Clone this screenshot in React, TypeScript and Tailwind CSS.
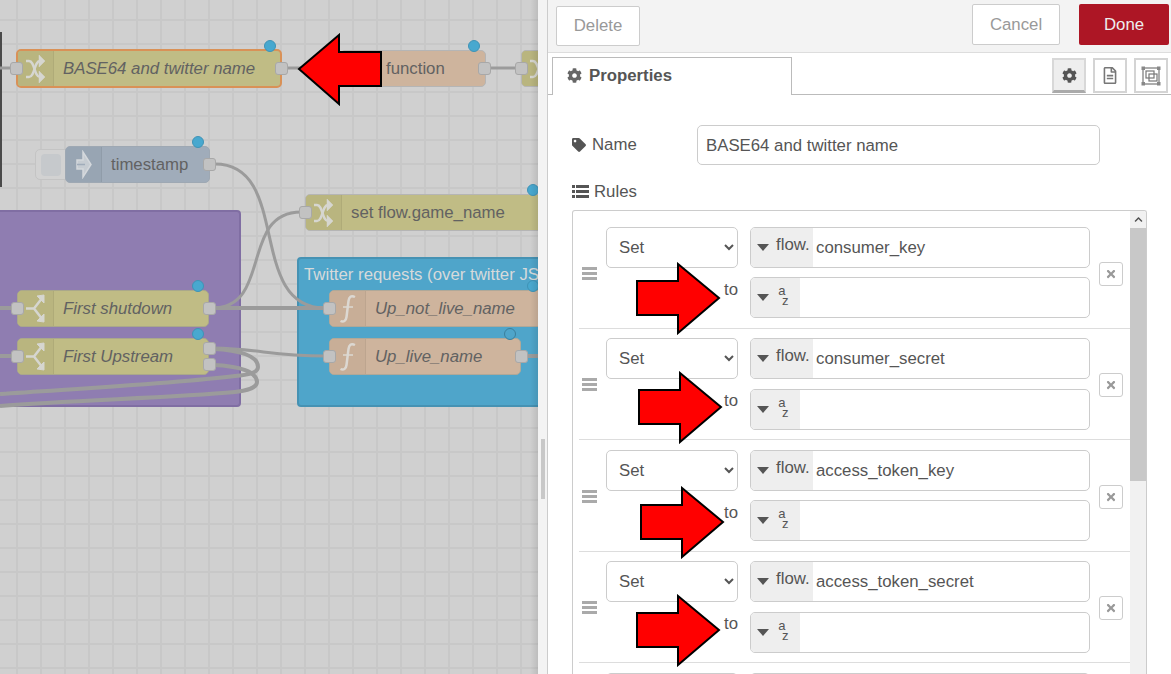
import React from "react";
import { FaChevronUp, FaCog, FaRegFileAlt, FaTag, FaTimes } from "react-icons/fa";

const font = "font-['Liberation_Sans',Arial,sans-serif]";

const ShuffleIcon = () => (
  <svg width="20" height="30" viewBox="0 0 20 30" fill="none" stroke="#d6d6d0" strokeWidth="2.500">
    <path d="M0 7h3C9 7 8 23 14 23h1" />
    <path d="M0 23h3C9 23 8 7 14 7h1" />
    <path d="M13 1l6 6-6 6zM13 17l6 6-6 6z" fill="#d6d6d0" strokeWidth="0.500" />
  </svg>
);

const SwitchIcon = () => (
  <svg width="19" height="29" viewBox="0 0 19 29" fill="none" stroke="#d6d6d0" strokeWidth="2.500">
    <path d="M0 14.500h8l7-9M8 14.500l7 9" />
    <path d="M11 2l7-1v8zM11 27l7 1v-8z" fill="#d6d6d0" strokeWidth="1" />
  </svg>
);

const FunctionIcon = () => (
  <svg width="18" height="30" viewBox="0 0 18 30" fill="none" stroke="#dcd8d2" strokeWidth="2.500">
    <path d="M16 3c-4-2-6 0-6.500 4l-2 16c-.5 4-3 5.500-6 4" />
    <path d="M4 13h10" strokeWidth="1.500" />
  </svg>
);

const InjectIcon = () => (
  <svg width="16" height="29" viewBox="0 0 16 29" fill="#c6ccd2" stroke="#d4d8dc" strokeWidth="1.500">
    <path d="M1 10h6V2l8 12.500L7 27v-8H1z" />
    <path d="M1 14.500h8" stroke="#a0acba" />
  </svg>
);

const Caret = () => (
  <svg width="12" height="7" viewBox="0 0 12 7" className="shrink-0" fill="#555">
    <polygon points="0,0 12,0 6,7" />
  </svg>
);

const Port = ({ className }: { className: string }) => (
  <div className={`absolute w-[13px] h-[13px] rounded-[3px] bg-[#c2c2c2] border border-[#a8a8a8] ${className}`} />
);

const Dot = ({ className }: { className: string }) => (
  <div className={`absolute w-[12px] h-[12px] rounded-full bg-[#48a8cf] border border-[#3f93b6] ${className}`} />
);

type NodeProps = {
  box: string;
  icon: React.ReactNode;
  label: string;
  textClass?: string;
  bg: string;
  iconBg: string;
};

const FlowNode = ({ box, icon, label, textClass = "", bg, iconBg }: NodeProps) => (
  <div className={`absolute h-[37px] rounded-[5px] border flex items-center overflow-hidden ${bg} ${box}`}>
    <div className={`w-[36px] h-full shrink-0 flex items-center justify-center border-r border-[#0000000d] ${iconBg}`}>{icon}</div>
    <span className={`ml-[9px] text-[16.800px] whitespace-nowrap text-[#626262] ${textClass}`}>{label}</span>
  </div>
);

const Wires = () => (
  <svg className="absolute inset-0 w-[538px] h-[674px]" fill="none" stroke="#9b9b9b" strokeWidth="3">
    <path d="M0 68h12M285 68h20M490 68h28" />
    <path d="M215 164C292 164 246 308 325 308" />
    <path d="M213 308C272 308 240 212 301 212" />
    <path d="M213 308H325" strokeWidth="4" />
    <path d="M213 348C262 349 270 356 325 356" />
    <path d="M213 349C240 350 258 356 258 367C258 373 248 375 235 376C170 384 70 389 0 394" strokeWidth="4" />
    <path d="M213 365C240 366 257 372 257 382C257 388 245 391 235 392C170 398 70 400 0 406" strokeWidth="4" />
    <path d="M0 308h12M0 356h12M525 356h13" strokeWidth="4" />
  </svg>
);

const Canvas = () => (
  <div className="relative w-[538px] h-full shrink-0 overflow-hidden bg-[#d0d0d0] bg-[linear-gradient(#c8c8c8_2px,transparent_2px),linear-gradient(90deg,#c8c8c8_2px,transparent_2px)] bg-[size:24px_24px] bg-[position:16px_19px] text-[#626262]">
    {/* Groups */}
    <div className="absolute left-0 top-[32px] w-[2px] h-[155px] bg-[#4a4a4a]" />
    <div className="absolute left-[-10px] top-[210px] w-[251px] h-[197px] rounded-[4px] bg-[#8f7db1] border-2 border-[#806ea3]" />
    <div className="absolute left-[297px] top-[257px] w-[260px] h-[150px] rounded-[4px] bg-[#4fa5ca] border-2 border-[#4692b3] overflow-hidden">
      <span className="absolute left-[5px] top-[3px] text-[16.800px] whitespace-nowrap text-[#d6dadb]">Twitter requests (over twitter JS</span>
    </div>

    <Wires />

    {/* Nodes */}
    <FlowNode box="left-[16px] top-[49px] w-[266px] h-[39px] border-2 border-[#d99157]" bg="bg-[#c0bc85]" iconBg="bg-[#b9b57f]" icon={<ShuffleIcon />} label="BASE64 and twitter name" textClass="italic" />
    <Port className="left-[10px] top-[62px]" />
    <Port className="left-[275px] top-[62px]" />
    <Dot className="left-[264px] top-[40px]" />

    <FlowNode box="left-[340px] top-[50px] w-[146px] border-[#b5b5b5]" bg="bg-[#ceb49d]" iconBg="bg-[#ceb49d]" icon={null} label="function" />
    <Port className="left-[478px] top-[62px]" />
    <Dot className="left-[468px] top-[40px]" />
    <FlowNode box="left-[521px] top-[50px] w-[60px] border-[#b5b5b5]" bg="bg-[#c0bc85]" iconBg="bg-[#b9b57f]" icon={<ShuffleIcon />} label="" />
    <Port className="left-[515px] top-[62px]" />

    <div className="absolute left-[35px] top-[149px] w-[35px] h-[31px] rounded-[5px] border border-[#c4c4c4] bg-[#d2d2d2] flex items-center pl-[5px]">
      <div className="w-[20px] h-[22px] rounded-[4px] bg-[#c6c9cc]" />
    </div>
    <FlowNode box="left-[65px] top-[146px] w-[145px] border-[#9ea8b3]" bg="bg-[#a0acba]" iconBg="bg-[#98a5b3]" icon={<InjectIcon />} label="timestamp" />
    <Port className="left-[203px] top-[158px]" />
    <Dot className="left-[192px] top-[136px]" />

    <FlowNode box="left-[305px] top-[194px] w-[300px] border-[#b5b5b5]" bg="bg-[#c0bc85]" iconBg="bg-[#b9b57f]" icon={<ShuffleIcon />} label="set flow.game_name" />
    <Port className="left-[299px] top-[206px]" />
    <Dot className="left-[527px] top-[184px]" />

    <FlowNode box="left-[17px] top-[290px] w-[192px] border-[#aaa88a]" bg="bg-[#c0bc85]" iconBg="bg-[#b9b57f]" icon={<SwitchIcon />} label="First shutdown" textClass="italic" />
    <Port className="left-[11px] top-[302px]" />
    <Port className="left-[203px] top-[302px]" />
    <Dot className="left-[192px] top-[280px]" />

    <FlowNode box="left-[17px] top-[338px] w-[192px] border-[#aaa88a]" bg="bg-[#c0bc85]" iconBg="bg-[#b9b57f]" icon={<SwitchIcon />} label="First Upstream" textClass="italic" />
    <Port className="left-[11px] top-[350px]" />
    <Port className="left-[203px] top-[342px]" />
    <Port className="left-[203px] top-[358px]" />
    <Dot className="left-[192px] top-[328px]" />

    <FlowNode box="left-[329px] top-[290px] w-[260px] border-[#b0a898]" bg="bg-[#ceb49d]" iconBg="bg-[#c8ae97]" icon={<FunctionIcon />} label="Up_not_live_name" textClass="italic" />
    <Port className="left-[323px] top-[302px]" />
    <Dot className="left-[527px] top-[280px]" />

    <FlowNode box="left-[329px] top-[338px] w-[192px] border-[#b0a898]" bg="bg-[#ceb49d]" iconBg="bg-[#c8ae97]" icon={<FunctionIcon />} label="Up_live_name" textClass="italic" />
    <Port className="left-[323px] top-[350px]" />
    <Port className="left-[515px] top-[350px]" />
    <div className="absolute left-[504px] top-[328px] w-[12px] h-[12px] rounded-full bg-[#4fa5ca] border border-[#3b7f9c]" />

    {/* Red callout over the node */}
    <svg className="absolute left-[297px] top-[33px]" width="86" height="73" viewBox="0 0 86 73">
      <polygon points="2,36 42,2 42,19 84,19 84,53 42,53 42,71" fill="#ff0000" stroke="#000" strokeWidth="2" />
    </svg>
    <div className="absolute top-0 right-0 w-[8px] h-full bg-gradient-to-r from-transparent to-[#00000018]" />
  </div>
);

const RedArrow = ({ className }: { className: string }) => (
  <svg className={`absolute z-10 ${className}`} width="86" height="73" viewBox="0 0 86 73">
    <polygon points="2,19 43,19 43,2 84,36 43,71 43,53 2,53" fill="#ff0000" stroke="#000" strokeWidth="2" />
  </svg>
);

const fieldBox = "h-[41px] border border-[#cccccc] rounded-[5px] flex overflow-hidden bg-white";

const TypedField = ({ kind, value }: { kind: "flow" | "str"; value?: string }) => (
  <div className={fieldBox}>
    {kind === "flow" ? (
      <div className="w-[62px] shrink-0 bg-[#eeeeee] flex items-center pl-[6px]">
        <Caret />
        <span className="ml-[7px] text-[16.800px] leading-none text-[#555] -mt-[4px]">flow.</span>
      </div>
    ) : (
      <div className="w-[49px] shrink-0 bg-[#eeeeee] flex items-center pl-[6px]">
        <Caret />
        <span className="ml-[9px] flex flex-col items-center text-[13px] leading-[10px] text-[#555]">
          <span className="-ml-[3px] -mt-[4px]">a</span>
          <span className="ml-[4px]">z</span>
        </span>
      </div>
    )}
    <input readOnly value={value ?? ""} className="min-w-0 flex-1 pl-[3px] text-[16.800px] text-[#555] outline-none" />
  </div>
);

const SetSelect = () => (
  <select defaultValue="Set" className="w-[132px] h-[41px] border border-[#cccccc] rounded-[5px] bg-white pl-[8px] text-[16.800px] text-[#555] outline-none">
    <option>Set</option>
  </select>
);

type Rule = { name: string; height: string; pad: string; gap: string; arrow: string };

const rules: Rule[] = [
  { name: "consumer_key", height: "h-[111px]", pad: "pt-[9px]", gap: "mt-[9px]", arrow: "left-[56px] top-[44px]" },
  { name: "consumer_secret", height: "h-[111px]", pad: "pt-[9px]", gap: "mt-[10px]", arrow: "left-[58px] top-[42px]" },
  { name: "access_token_key", height: "h-[112px]", pad: "pt-[10px]", gap: "mt-[9px]", arrow: "left-[60px] top-[46px]" },
  { name: "access_token_secret", height: "h-[111px]", pad: "pt-[9px]", gap: "mt-[10px]", arrow: "left-[56px] top-[42px]" },
];

const RuleRow = ({ rule }: { rule: Rule }) => (
  <div className={`relative flex items-start border-b border-[#dddddd] ${rule.height} ${rule.pad}`}>
    <div className="w-[27px] shrink-0 pl-[3px] mt-[40px] flex flex-col gap-[2px]">
      <div className="w-[15px] h-[3px] bg-[#aaaaaa]" />
      <div className="w-[15px] h-[3px] bg-[#aaaaaa]" />
      <div className="w-[15px] h-[3px] bg-[#aaaaaa]" />
    </div>
    <div className="w-[132px] shrink-0">
      <SetSelect />
      <div className="mt-[12px] text-right text-[16.800px] leading-[20px] text-[#555]">to</div>
    </div>
    <div className="w-[340px] ml-[12px] shrink-0">
      <TypedField kind="flow" value={rule.name} />
      <div className={rule.gap}>
        <TypedField kind="str" />
      </div>
    </div>
    <button className="ml-[9px] mt-[35px] w-[24px] h-[24px] shrink-0 border border-[#cccccc] rounded-[3px] flex items-center justify-center text-[#999]">
      <FaTimes className="w-[12px] h-[12px]" />
    </button>
    <RedArrow className={rule.arrow} />
  </div>
);

const Tray = () => (
  <div className="relative flex-1 h-full bg-white flex flex-col border-l border-[#cccccc] ml-[9px] min-w-0 text-[#555]">
    {/* Buttons */}
    <div className="h-[53px] shrink-0 bg-[#f3f3f3] border-b border-[#dddddd] flex items-start pl-[8px] pr-[2px]">
      <button className="mt-[6px] w-[84px] h-[40px] bg-white border border-[#cccccc] rounded-[2px] text-[16.800px] text-[#999]">Delete</button>
      <button className="ml-auto mt-[4px] w-[88px] h-[41px] bg-white border border-[#cccccc] rounded-[2px] text-[16.800px] text-[#999]">Cancel</button>
      <button className="ml-[19px] mt-[4px] w-[90px] h-[41px] bg-[#ad1625] rounded-[2px] text-[16.800px] text-[#eeeeee]">Done</button>
    </div>

    {/* Tabs */}
    <div className="relative h-[42px] shrink-0 border-b border-[#bbbbbb] pt-[4px] pl-[4px]">
      <div className="w-[240px] h-[38px] bg-white border border-b-0 border-[#bbbbbb] flex items-center pl-[14px] pb-[2px] font-bold text-[16.800px] text-[#555]">
        <FaCog className="w-[15px] h-[15px] mr-[7px] text-[#666]" />
        Properties
      </div>
      <div className="absolute right-[3px] top-[5px] flex gap-[7px]">
        <div className="w-[34px] h-[35px] bg-[#eeeeee] border-2 border-[#d8d8d8] border-b-[3px] border-b-[#aaaaaa] flex items-center justify-center">
          <FaCog className="w-[15px] h-[15px] text-[#555]" />
        </div>
        <div className="w-[34px] h-[35px] border-2 border-[#d4d4d4] flex items-center justify-center">
          <FaRegFileAlt className="w-[14px] h-[17px] text-[#777]" />
        </div>
        <div className="w-[34px] h-[35px] border-2 border-[#d4d4d4] flex items-center justify-center">
          <svg width="20" height="20" viewBox="0 0 20 20" fill="none" stroke="#777" strokeWidth="1.200">
            <rect x="2" y="2" width="16" height="16" />
            <rect x="5" y="5" width="8" height="7" />
            <rect x="8" y="8" width="8" height="7" />
            <g fill="#888" stroke="none">
              <rect x="0.500" y="0.500" width="3.500" height="3.500" />
              <rect x="16" y="0.500" width="3.500" height="3.500" />
              <rect x="0.500" y="16" width="3.500" height="3.500" />
              <rect x="16" y="16" width="3.500" height="3.500" />
            </g>
          </svg>
        </div>
      </div>
    </div>

    {/* Form */}
    <div className="flex-1 min-h-0 flex flex-col pt-[30px] pl-[24px]">
      <div className="flex items-center h-[40px] shrink-0">
        <label className="w-[125px] flex items-center text-[16.800px]">
          <FaTag className="w-[14px] h-[14px] mr-[6px]" />
          Name
        </label>
        <input readOnly value="BASE64 and twitter name" className="w-[403px] h-[40px] border border-[#cccccc] rounded-[5px] pl-[8px] pt-[1px] text-[16.800px] text-[#555] outline-none" />
      </div>
      <label className="mt-[17px] h-[20px] shrink-0 flex items-center text-[16.800px]">
        <svg width="17" height="14" viewBox="0 0 17 14" className="mr-[5px]" fill="#555">
          <rect x="0" y="0" width="3" height="3" />
          <rect x="4" y="0" width="13" height="3" />
          <rect x="0" y="5" width="3" height="3" />
          <rect x="4" y="5" width="13" height="3" />
          <rect x="0" y="10" width="3" height="3" />
          <rect x="4" y="10" width="13" height="3" />
        </svg>
        Rules
      </label>
      <div className="mt-[8px] w-[575px] flex-1 min-h-0 border border-[#cccccc] border-b-0 rounded-t-[3px] flex overflow-hidden">
        <div className="w-[557px] shrink-0 pt-[7px] pl-[6px]">
          {rules.map((rule) => (
            <RuleRow key={rule.name} rule={rule} />
          ))}
          <div className="pt-[10px] pl-[27px] flex gap-[12px]">
            <div className="w-[132px] h-[41px] border border-[#cccccc] rounded-[5px] shrink-0" />
            <div className="w-[340px] h-[41px] border border-[#cccccc] rounded-[5px] shrink-0" />
          </div>
        </div>
        {/* Scrollbar */}
        <div className="w-[17px] shrink-0 bg-[#f1f1f1] flex flex-col">
          <div className="h-[17px] flex items-center justify-center">
            <FaChevronUp className="w-[9px] h-[9px] text-[#505050]" />
          </div>
          <div className="h-[253px] bg-[#c8c8c8]" />
        </div>
      </div>
    </div>
  </div>
);

export default function App() {
  return (
    <div className={`relative w-[1171px] h-[674px] flex overflow-hidden bg-[#f3f3f3] ${font}`}>
      <Canvas />
      {/* Sidebar separator handle */}
      <div className="absolute left-[541px] top-[439px] w-[4px] h-[60px] bg-[#c8c8c8]" />
      <Tray />
    </div>
  );
}
